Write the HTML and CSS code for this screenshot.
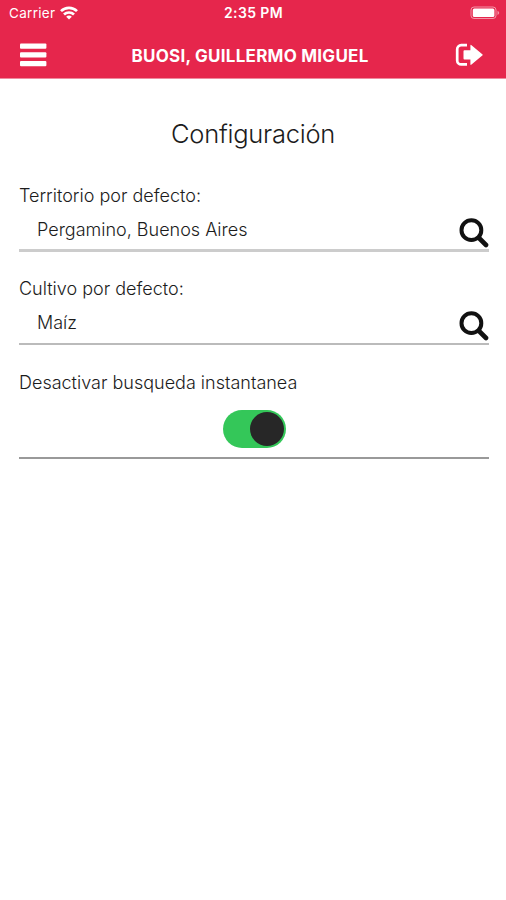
FILE: index.html
```html
<!DOCTYPE html>
<html lang="es">

<head>
    <meta charset="UTF-8">
    <meta name="viewport" content="width=device-width, initial-scale=1.0">
    <title>Configuración</title>
    <link rel="stylesheet" href="styles.css">
</head>

<body>
    <header>
        <div class="status">
            <div class="carrier">
                <span>Carrier</span>
                <svg class="wifi" viewBox="0 0 18 14" fill="none" stroke="#fff" stroke-width="2.7">
                    <path d="M1 5.1a11.5 11.5 0 0 1 16 0" />
                    <path d="M4 8.5a7.2 7.2 0 0 1 10 0" />
                    <path d="M6.2 10.8a3.8 3.8 0 0 1 5.6 0L9 13.6z" fill="#fff" stroke="none" />
                </svg>
            </div>
            <span class="time">2:35 PM</span>
            <svg class="battery" viewBox="0 0 30 14">
                <rect x="1" y="1" width="25" height="11.5" rx="3" fill="none" stroke="#fff" stroke-opacity=".5" />
                <rect x="2.8" y="2.6" width="21.6" height="8.4" rx="1.5" fill="#fff" />
                <path d="M27.5 4.7c2.2.8 2.2 3.4 0 4.2z" fill="#fff" fill-opacity=".5" />
            </svg>
        </div>
        <nav>
            <svg class="menu" viewBox="0 0 28 24" fill="#fff">
                <rect x="1" y="0.6" width="26.4" height="5.2" rx="1" />
                <rect x="1" y="9.3" width="26.4" height="5.2" rx="1" />
                <rect x="1" y="18" width="26.4" height="5.2" rx="1" />
            </svg>
            <h1 class="user">BUOSI, GUILLERMO MIGUEL</h1>
            <svg class="logout" viewBox="0 0 28 24" fill="#fff">
                <path d="M12 2.2H6.2a4 4 0 0 0-4 4v11.2a4 4 0 0 0 4 4H12" fill="none" stroke="#fff" stroke-width="2.7" />
                <path d="M8.5 8.2q0-.9.9-.9h6V2.7q0-1.4 1.1-.5l10.8 9q.8.7 0 1.4l-10.8 9q-1.1.9-1.1-.5v-4.6h-6q-.9 0-.9-.9z" />
            </svg>
        </nav>
    </header>

    <main>
        <h2>Configuración</h2>

        <div class="field">
            <label>Territorio por defecto:</label>
            <div class="value">
                <span>Pergamino, Buenos Aires</span>
                <svg class="search" viewBox="0 0 30 30" fill="none" stroke="#111" stroke-linecap="round">
                    <circle cx="12.4" cy="12.2" r="9.9" stroke-width="4" />
                    <path d="M20 20l7 7" stroke-width="4.6" />
                </svg>
            </div>
        </div>

        <div class="field thin">
            <label>Cultivo por defecto:</label>
            <div class="value">
                <span>Maíz</span>
                <svg class="search" viewBox="0 0 30 30" fill="none" stroke="#111" stroke-linecap="round">
                    <circle cx="12.4" cy="12.2" r="9.9" stroke-width="4" />
                    <path d="M20 20l7 7" stroke-width="4.6" />
                </svg>
            </div>
        </div>

        <div class="field toggle">
            <label>Desactivar busqueda instantanea</label>
            <div class="switch">
                <div class="thumb"></div>
            </div>
        </div>
    </main>
</body>

</html>
```
FILE: styles.css
```css
* {
    box-sizing: border-box;
}

body {
    margin: 0;
    min-height: 900px;
    background-color: white;
    font-family: Inter, "Liberation Sans", sans-serif;
    color: #1c1c1c;
}

svg {
    display: block;
}

header {
    height: 79px;
    background-color: #e6264c;
    border-bottom: 1px solid #ef8a9e;
    color: white;
}

.status {
    display: grid;
    grid-template-columns: 1fr auto 1fr;
    align-items: center;
    height: 26px;
    padding: 0 6px 0 9px;
    font-size: 13.5px;
    line-height: 26px;
}

.carrier {
    display: flex;
    align-items: center;
    gap: 5px;
    letter-spacing: 0.3px;
}

.wifi {
    width: 18px;
    height: 14px;
}

.time {
    margin-right: 2px;
    font-size: 14px;
    font-weight: 600;
    letter-spacing: 0.4px;
}

.battery {
    width: 30px;
    height: 14px;
    justify-self: end;
}

nav {
    display: flex;
    align-items: center;
    justify-content: space-between;
    height: 52px;
    padding: 6px 23px 0 19px;
}

.menu,
.logout {
    width: 28px;
    height: 24px;
}

.user {
    margin: 1px 2px 0 0;
    font-size: 17px;
    font-weight: 700;
    letter-spacing: 0.25px;
}

main {
    padding: 39px 17px 0 19px;
}

h2 {
    margin: 0 2px 34px 0;
    font-size: 25.5px;
    font-weight: 300;
    line-height: 32px;
    letter-spacing: -0.25px;
    text-align: center;
}

.field {
    height: 68px;
    margin-bottom: 25px;
    border-bottom: 3px solid #ccc;
    font-size: 18px;
    font-weight: 300;
}

.field label {
    display: block;
    height: 34px;
    line-height: 24px;
}

.value {
    display: flex;
    justify-content: space-between;
    line-height: 24px;
    padding-left: 18px;
}

.search {
    width: 30px;
    height: 30px;
}

.thin {
    border-bottom: 2px solid #bbb;
}

.toggle {
    height: 89px;
    border-bottom: 2px solid #999;
}

.toggle label {
    line-height: 26px;
}

.switch {
    display: flex;
    justify-content: flex-end;
    width: 63px;
    height: 38px;
    margin: 6px auto 0;
    padding: 2px;
    border-radius: 19px;
    background-color: #34c759;
}

.thumb {
    width: 34px;
    height: 34px;
    border-radius: 50%;
    background-color: #272727;
}
```
